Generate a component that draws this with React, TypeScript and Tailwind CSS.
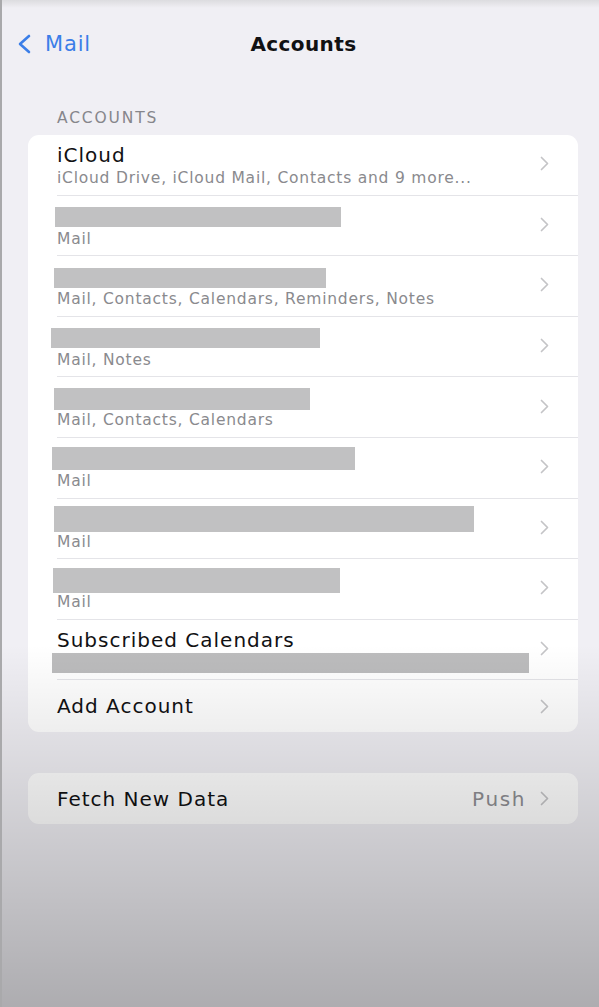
import React from "react";

const font = { fontFamily: "'DejaVu Sans', Verdana, sans-serif" };

function Chevron({ className = "" }: { className?: string }) {
  return (
    <svg width="9" height="15" viewBox="0 0 9 15" className={className} fill="none">
      <path d="M1.5 1.5 L7.5 7.5 L1.5 13.5" stroke="#c4c4c7" strokeWidth="1.7" strokeLinecap="round" strokeLinejoin="round" />
    </svg>
  );
}

type Row = {
  title?: string;
  bar?: { ml: number; w: number; h: number; mt: number };
  sub?: string;
  subBar?: { ml: number; w: number };
};

const rows: Row[] = [
  { title: "iCloud", sub: "iCloud Drive, iCloud Mail, Contacts and 9 more..." },
  { bar: { ml: -2, w: 286, h: 20, mt: 2 }, sub: "Mail" },
  { bar: { ml: -3, w: 272, h: 20, mt: 2 }, sub: "Mail, Contacts, Calendars, Reminders, Notes" },
  { bar: { ml: -6, w: 269, h: 20, mt: 2 }, sub: "Mail, Notes" },
  { bar: { ml: -3, w: 256, h: 22, mt: 2 }, sub: "Mail, Contacts, Calendars" },
  { bar: { ml: -5, w: 303, h: 23, mt: 1 }, sub: "Mail" },
  { bar: { ml: -3, w: 420, h: 26, mt: 0 }, sub: "Mail" },
  { bar: { ml: -4, w: 287, h: 25, mt: 1 }, sub: "Mail" },
  { title: "Subscribed Calendars", subBar: { ml: -5, w: 477 } },
];

function ListRow({ row }: { row: Row }) {
  return (
    <div className="h-[60.6px] pl-[29px]">
      <div className="h-full flex items-start border-b border-[#e4e4e8] pr-[29px]">
        <div className="flex-1 min-w-0 pt-[9px]">
          <div className="h-[23px] flex items-center">
            {row.title ? (
              <span className="text-[20px] leading-[23px] tracking-[0.05em] text-[#111113]">{row.title}</span>
            ) : row.bar ? (
              <div
                className="bg-[#c1c1c2]"
                style={{ marginLeft: row.bar.ml, width: row.bar.w, height: row.bar.h, marginTop: row.bar.mt }}
              />
            ) : null}
          </div>
          <div className="h-[20px] mt-[1px] flex items-center">
            {row.sub ? (
              <span className="text-[15.5px] leading-[20px] tracking-[0.05em] text-[#8a8a8e] whitespace-nowrap">{row.sub}</span>
            ) : row.subBar ? (
              <div className="h-[20px] bg-[#bcbcbd]" style={{ marginLeft: row.subBar.ml, width: row.subBar.w }} />
            ) : null}
          </div>
        </div>
        <div className="h-full flex items-center pb-[2px]">
          <Chevron />
        </div>
      </div>
    </div>
  );
}

export default function App() {
  return (
    <div className="relative w-full min-h-[1007px] overflow-hidden bg-[#f0eff4] border-l-2 border-[#a9a9ab]" style={font}>
      {/* status bar remnant */}
      <div className="h-[8px] bg-[linear-gradient(to_bottom,#dcdcdf,#f0eff4)]" />

      {/* Nav bar */}
      <div className="h-[72px] grid grid-cols-[1fr_auto_1fr] items-center">
        <div className="flex items-center pl-[14px] gap-[12px]">
          <svg width="17" height="20" viewBox="0 0 17 20" fill="none">
            <path d="M13 2 L4 10 L13 18" stroke="#3b7ee8" strokeWidth="2.6" strokeLinecap="round" strokeLinejoin="round" />
          </svg>
          <span className="text-[21px] tracking-[0.04em] text-[#3b7ee8] leading-none">Mail</span>
        </div>
        <div className="text-[20px] font-bold tracking-[0.02em] text-[#111113] ml-[6px]">Accounts</div>
        <div />
      </div>

      {/* Section header */}
      <div className="mt-[28px] pl-[55px] text-[15.5px] leading-[20px] tracking-[0.12em] text-[#86868b] uppercase">
        Accounts
      </div>

      {/* Accounts card */}
      <div className="mt-[7px] ml-[26px] mr-[21px] bg-white rounded-[11px] overflow-hidden">
        {rows.map((r, i) => (
          <ListRow key={i} row={r} />
        ))}
        <div className="h-[52px] pl-[29px] pr-[29px] flex items-center">
          <span className="flex-1 text-[20px] tracking-[0.05em] text-[#111113]">Add Account</span>
          <Chevron />
        </div>
      </div>

      {/* Fetch New Data */}
      <div className="mt-[41px] ml-[26px] mr-[21px] h-[51px] bg-white rounded-[11px] pl-[29px] pr-[29px] flex items-center">
        <span className="flex-1 text-[20px] tracking-[0.05em] text-[#111113]">Fetch New Data</span>
        <span className="text-[20px] tracking-[0.08em] text-[#8e8e93] mr-[14px]">Push</span>
        <Chevron />
      </div>

      {/* bottom dimming */}
      <div className="pointer-events-none absolute inset-0 bg-[linear-gradient(to_bottom,transparent_64%,rgba(0,0,0,0.28)_100%)]" />
    </div>
  );
}
